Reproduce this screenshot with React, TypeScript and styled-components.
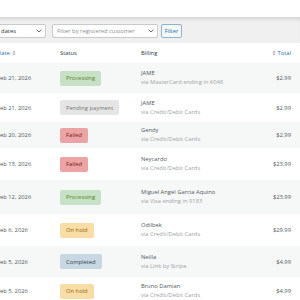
import React from "react";
import styled, { createGlobalStyle } from "styled-components";

const GlobalStyle = createGlobalStyle`
  html, body { margin: 0; padding: 0; background: #fff; }
  body {
    font-family: "Open Sans", "Noto Sans", "Liberation Sans", sans-serif;
    font-size: 5.8px;
    color: #50575e;
    overflow: hidden;
  }
`;

const Page = styled.div`
  width: 312px;
  margin-left: -12px;
`;

const TopBar = styled.div`
  height: 17px;
  background: #fff;
`;

const FilterBar = styled.div`
  height: 26px;
  box-sizing: border-box;
  padding-top: 7px;
  background: #f0f0f1;
  box-shadow: inset 0 4px 4px -2px rgba(0, 0, 0, 0.13);
  display: flex;
  align-items: flex-start;
`;

const Select = styled.div<{ $w: number; $gap: number }>`
  width: ${(p) => p.$w}px;
  height: 14px;
  margin-right: ${(p) => p.$gap}px;
  box-sizing: border-box;
  background: #fff;
  border: 1px solid #c9cacc;
  border-radius: 2px;
  display: flex;
  align-items: center;
  justify-content: space-between;
  padding: 0 3px 0 4px;
  color: #2c3338;
`;

const Placeholder = styled.span`
  color: #8c8f94;
  white-space: nowrap;
`;

const Chevron = () => (
  <svg width="6" height="4" viewBox="0 0 6 4">
    <path d="M0.7 0.8 L3 3 L5.3 0.8" fill="none" stroke="#50575e" strokeWidth="0.9" />
  </svg>
);

const FilterButton = styled.div`
  width: 21px;
  height: 14px;
  box-sizing: border-box;
  border: 1px solid #8db3d3;
  border-radius: 2px;
  background: #f6f7f7;
  color: #2271b1;
  display: flex;
  align-items: center;
  justify-content: center;
`;

const Row = styled.div<{ $h: number; $bg: string }>`
  display: grid;
  grid-template-columns: 68px 81px 1fr 60px;
  height: ${(p) => p.$h}px;
  background: ${(p) => p.$bg};
  align-items: center;
`;

const HeadCell = styled.div<{ $link?: boolean; $right?: boolean }>`
  display: flex;
  align-items: center;
  gap: 2px;
  color: ${(p) => (p.$link ? "#2271b1" : "#2c3338")};
  justify-content: ${(p) => (p.$right ? "flex-end" : "flex-start")};
`;

const DateCell = styled.div`
  padding-left: 9px;
  white-space: nowrap;
`;

const StatusCell = styled.div`
  padding-left: 4px;
`;

const BillingCell = styled.div`
  padding-left: 4px;
  display: flex;
  flex-direction: column;
  line-height: 9px;
  white-space: nowrap;
`;

const TotalCell = styled.div`
  padding-right: 9px;
  text-align: right;
`;

const Name = styled.span`
  color: #50575e;
`;

const Via = styled.span`
  color: #a0a3a7;
`;

const badgeColors: Record<string, [string, string]> = {
  processing: ["#c6e1c6", "#5b841b"],
  pending: ["#e5e5e5", "#777777"],
  failed: ["#eba3a3", "#761919"],
  onhold: ["#f8dda7", "#94660c"],
  completed: ["#c8d7e1", "#2e4453"],
};

const Badge = styled.span<{ $kind: string }>`
  display: inline-flex;
  align-items: center;
  height: 15px;
  padding: 0 6px;
  border-radius: 2px;
  white-space: nowrap;
  background: ${(p) => badgeColors[p.$kind][0]};
  color: ${(p) => badgeColors[p.$kind][1]};
`;

const Sort = () => (
  <svg width="4" height="6" viewBox="0 0 4 6">
    <path d="M0.4 2.4 L2 0.6 L3.6 2.4 Z M0.4 3.6 L2 5.4 L3.6 3.6 Z" fill="#a7aaad" />
  </svg>
);

const rows = [
  { d: "Feb 21, 2026", s: "processing", l: "Processing", n: "JAME", v: "via MasterCard ending in 6048", t: "$2.99", h: 30 },
  { d: "Feb 21, 2026", s: "pending", l: "Pending payment", n: "JAME", v: "via Credit/Debit Cards", t: "$2.99", h: 29 },
  { d: "Feb 20, 2026", s: "failed", l: "Failed", n: "Gendy", v: "via Credit/Debit Cards", t: "$2.99", h: 26 },
  { d: "Feb 13, 2026", s: "failed", l: "Failed", n: "Neycardo", v: "via Credit/Debit Cards", t: "$23.99", h: 32 },
  { d: "Feb 12, 2026", s: "processing", l: "Processing", n: "Miguel Angel Garcia Aquino", v: "via Visa ending in 9183", t: "$23.99", h: 34 },
  { d: "Feb 6, 2026", s: "onhold", l: "On hold", n: "Odilbek", v: "via Credit/Debit Cards", t: "$29.99", h: 32 },
  { d: "Feb 5, 2026", s: "completed", l: "Completed", n: "Neilla", v: "via Link by Stripe", t: "$4.99", h: 31 },
  { d: "Feb 5, 2026", s: "onhold", l: "On hold", n: "Bruno Damian", v: "via Credit/Debit Cards", t: "$4.99", h: 28 },
];

export default function App() {
  return (
    <>
      <GlobalStyle />
      <Page>
        <TopBar />
        <FilterBar>
          <Select $w={58} $gap={6}>
            <span>All dates</span>
            <Chevron />
          </Select>
          <Select $w={106} $gap={3}>
            <Placeholder>Filter by registered customer</Placeholder>
            <Chevron />
          </Select>
          <FilterButton>Filter</FilterButton>
        </FilterBar>
        <Row $h={20} $bg="#fff">
          <DateCell>
            <HeadCell $link>
              Date <Sort />
            </HeadCell>
          </DateCell>
          <StatusCell>
            <HeadCell>Status</HeadCell>
          </StatusCell>
          <BillingCell>
            <HeadCell>Billing</HeadCell>
          </BillingCell>
          <TotalCell>
            <HeadCell $link $right>
              <Sort /> Total
            </HeadCell>
          </TotalCell>
        </Row>
        {rows.map((r, i) => (
          <Row key={i} $h={r.h} $bg={i % 2 === 0 ? "#f6f7f7" : "#fff"}>
            <DateCell>{r.d}</DateCell>
            <StatusCell>
              <Badge $kind={r.s}>{r.l}</Badge>
            </StatusCell>
            <BillingCell>
              <Name>{r.n}</Name>
              <Via>{r.v}</Via>
            </BillingCell>
            <TotalCell>{r.t}</TotalCell>
          </Row>
        ))}
      </Page>
    </>
  );
}
